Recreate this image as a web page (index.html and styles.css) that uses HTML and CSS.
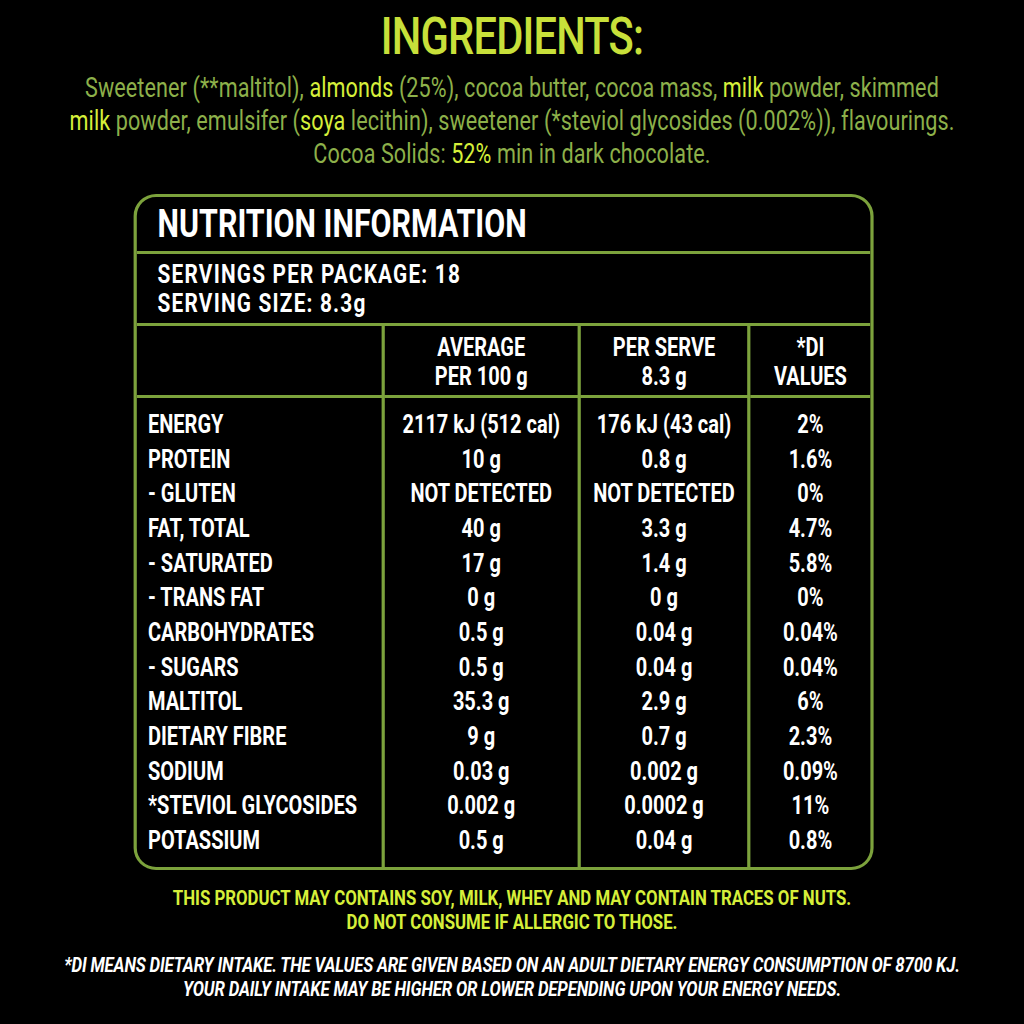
FILE: index.html
```html
<!DOCTYPE html>
<html lang="en">
<head>
<meta charset="utf-8">
<title>Nutrition Information</title>
<link rel="stylesheet" href="styles.css">
</head>
<body>
<div class="frame">
<main class="page">
  <h1 class="heading">INGREDIENTS:</h1>
  <p class="ingredients">Sweetener (**maltitol), <b>almonds</b> (25%), cocoa butter, cocoa mass, <b>milk</b> powder, skimmed<br><b>milk</b> powder, emulsifer (<b>soya</b> lecithin), sweetener (*steviol glycosides (0.002%)), flavourings.<br>Cocoa Solids: <b>52%</b> min in dark chocolate.</p>

  <section class="panel">
    <div class="panel-title">NUTRITION INFORMATION</div>
    <div class="servings">SERVINGS PER PACKAGE: 18<br>SERVING SIZE: 8.3g</div>
    <div class="grid">
      <div class="head c1"></div>
      <div class="head c2">AVERAGE<br>PER 100 g</div>
      <div class="head c3">PER SERVE<br>8.3 g</div>
      <div class="head c4">*DI<br>VALUES</div>

      <div class="col c1 labels">
        <div>ENERGY</div><div>PROTEIN</div><div>- GLUTEN</div><div>FAT, TOTAL</div><div>- SATURATED</div><div>- TRANS FAT</div><div>CARBOHYDRATES</div><div>- SUGARS</div><div>MALTITOL</div><div>DIETARY FIBRE</div><div>SODIUM</div><div>*STEVIOL GLYCOSIDES</div><div>POTASSIUM</div>
      </div>
      <div class="col c2">
        <div>2117 kJ (512 cal)</div><div>10 g</div><div>NOT DETECTED</div><div>40 g</div><div>17 g</div><div>0 g</div><div>0.5 g</div><div>0.5 g</div><div>35.3 g</div><div>9 g</div><div>0.03 g</div><div>0.002 g</div><div>0.5 g</div>
      </div>
      <div class="col c3">
        <div>176 kJ (43 cal)</div><div>0.8 g</div><div>NOT DETECTED</div><div>3.3 g</div><div>1.4 g</div><div>0 g</div><div>0.04 g</div><div>0.04 g</div><div>2.9 g</div><div>0.7 g</div><div>0.002 g</div><div>0.0002 g</div><div>0.04 g</div>
      </div>
      <div class="col c4">
        <div>2%</div><div>1.6%</div><div>0%</div><div>4.7%</div><div>5.8%</div><div>0%</div><div>0.04%</div><div>0.04%</div><div>6%</div><div>2.3%</div><div>0.09%</div><div>11%</div><div>0.8%</div>
      </div>
    </div>
  </section>

  <p class="allergens">THIS PRODUCT MAY CONTAINS SOY, MILK, WHEY AND MAY CONTAIN TRACES OF NUTS.<br>DO NOT CONSUME IF ALLERGIC TO THOSE.</p>
  <p class="footnote">*DI MEANS DIETARY INTAKE. THE VALUES ARE GIVEN BASED ON AN ADULT DIETARY ENERGY CONSUMPTION OF 8700 KJ.<br>YOUR DAILY INTAKE MAY BE HIGHER OR LOWER DEPENDING UPON YOUR ENERGY NEEDS.</p>
</main>
</div>
</body>
</html>
```
FILE: styles.css
```css
html, body {
  margin: 0;
  padding: 0;
  background: #000;
}
.frame {
  width: 1024px;
  height: 1024px;
  overflow: hidden;
}
/* The whole label is laid out 1.25x wider and condensed horizontally,
   imitating the condensed typeface of the original artwork. */
.page {
  width: 1280px;
  height: 1024px;
  transform: scaleX(0.8);
  transform-origin: 0 0;
  font-family: "Roboto", "Liberation Sans", sans-serif;
  color: #fff;
  box-sizing: border-box;
  padding-top: 11px;
}
.heading {
  margin: 0;
  text-align: center;
  font-size: 52px;
  line-height: 52px;
  font-weight: 500;
  color: #c8e03a;
  letter-spacing: -1px;
}
.ingredients {
  margin: 9px 0 0;
  text-align: center;
  font-size: 27px;
  line-height: 33px;
  letter-spacing: 0.1px;
  color: #8db04a;
}
.ingredients b {
  font-weight: normal;
  color: #d6ef3a;
}
.panel {
  margin: 23px 0 0 167px;
  width: 925px;
  box-sizing: border-box;
  border: 3px solid #7ca23c;
  border-left-width: 4px;
  border-right-width: 4px;
  border-radius: 28px / 22px;
  overflow: hidden;
}
.panel-title {
  font-size: 38px;
  font-weight: bold;
  line-height: 54px;
  padding-left: 26px;
  border-bottom: 3px solid #7ca23c;
}
.servings {
  font-size: 26px;
  font-weight: bold;
  line-height: 29px;
  letter-spacing: 1.5px;
  padding: 6px 0 5px 26px;
  border-bottom: 3px solid #7ca23c;
}
.grid {
  display: grid;
  grid-template-columns: 310px 245px 212px 1fr;
}
.head {
  font-size: 25px;
  font-weight: bold;
  line-height: 29px;
  text-align: center;
  padding: 7px 0 4px;
  border-bottom: 3px solid #7ca23c;
}
.c1, .c2, .c3 {
  border-right: 4px solid #7ca23c;
}
.col {
  font-size: 25px;
  font-weight: bold;
  line-height: 34.67px;
  text-align: center;
  padding: 10px 0 8px;
}
.col.labels {
  text-align: left;
  padding-left: 14px;
}
.allergens {
  margin: 16px 0 0;
  text-align: center;
  font-size: 21px;
  line-height: 24px;
  font-weight: bold;
  color: #d6ef3a;
}
.footnote {
  margin: 19px 0 0;
  text-align: center;
  font-size: 21px;
  line-height: 24px;
  letter-spacing: -0.2px;
  font-style: italic;
  font-weight: bold;
  color: #fff;
}
```
